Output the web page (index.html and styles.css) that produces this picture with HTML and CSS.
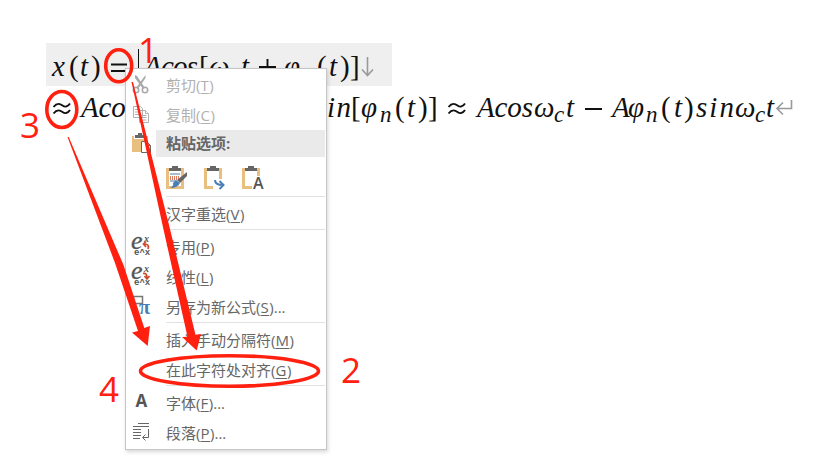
FILE: index.html
```html
<!DOCTYPE html>
<html lang="zh-CN">
<head>
<meta charset="utf-8">
<title>公式对齐</title>
<link rel="stylesheet" href="styles.css">
</head>
<body>
<main class="document">
  <svg class="equation equation-active" width="346" height="43" viewBox="46 43 346 43">
    <text x="52" y="76" textLength="14">x</text><text class="upright" x="69" y="76">(</text><text x="80" y="76">t</text><text class="upright" x="91" y="76">)</text>
    <path class="operator" d="M111 64.5h16M111 71h16M259 67h17M267.500 59v17"/>
    <path class="caret" d="M138.500 49v22"/>
    <text x="144" y="76" textLength="54">Acos</text><text class="upright" x="199" y="76">[</text><text x="209" y="76">ω</text><text class="sub" x="229" y="81">c</text><text x="241" y="76">t</text><text x="284" y="76">φ</text><text class="sub" x="303" y="81">n</text><text class="upright" x="317" y="76">(</text><text x="329" y="76">t</text><text class="upright" x="340" y="76">)</text><text class="upright" x="350" y="76">]</text>
    <path class="mark" d="M367.500 57v18M362 69.500l5.500 6 5.500-6"/>
  </svg>
  <svg class="equation" width="760" height="43" viewBox="46 86 760 43">
    <path class="operator" d="M53.500 107c4-5 7-3 9-1.500s5 2 7.500-2M53.500 113.500c4-5 7-3 9-1.500s5 2 7.500-2M448.500 107c4-5 7-3 9-1.500s5 2 7.500-2M448.500 113.500c4-5 7-3 9-1.500s5 2 7.500-2M585 109h17"/>
    <text x="81" y="117" textLength="56">Acos</text>
    <text x="327" y="117" textLength="24">in</text><text class="upright" x="351" y="117">[</text><text x="361" y="117">φ</text><text class="sub" x="380" y="122">n</text><text class="upright" x="395" y="117">(</text><text x="407" y="117">t</text><text class="upright" x="418" y="117">)</text><text class="upright" x="428" y="117">]</text>
    <text x="477" y="117" textLength="56">Acos</text><text x="534" y="117">ω</text><text class="sub" x="554" y="122">c</text><text x="566" y="117">t</text>
    <text x="612" y="117">A</text><text x="628" y="117">φ</text><text class="sub" x="646" y="122">n</text><text class="upright" x="661" y="117">(</text><text x="674" y="117">t</text><text class="upright" x="684" y="117">)</text><text x="696" y="117" textLength="38">sin</text><text x="735" y="117">ω</text><text class="sub" x="755" y="122">c</text><text x="766" y="117">t</text>
    <path class="mark" d="M791.500 100v8.500H777M783 102.500l-6 6 6 6"/>
  </svg>
</main>

<nav class="menu">
  <div class="item disabled"><svg class="icon" viewBox="0 0 20 20"><g fill="none" stroke="#aaa" stroke-width="1.600"><circle cx="5" cy="16" r="2.700"/><circle cx="14" cy="16" r="2.700"/></g><path d="M4 1l2 1 8 12-2 1L4 4zM14.500 1v3L7 15l-2-1z" fill="#aaa"/></svg><span>剪切(<u>T</u>)</span></div>
  <div class="item disabled"><svg class="icon" viewBox="0 0 20 20" fill="#fff" stroke="#b0b0b0"><path d="M2.500 2.500h7l2 2v9h-9zM8.500 6.500h6l3 3v9h-9z"/><path d="M4 5.500h4M4 8h4M4 10.500h4M10.500 11.500h5M10.500 13.500h5M10.500 16h5M14.500 6.500v3h3"/></svg><span>复制(<u>C</u>)</span></div>
  <div class="heading"><svg class="icon" viewBox="0 0 20 20"><path d="M1 3h16v16H1z" fill="#e8bf7e"/><path d="M3 6V2h3V0h5v2h3v4z" fill="#fff"/><path d="M4 5V2h3V0h4v2h3v3z" fill="#666"/><path d="M10.500 8.500h5l4 4v7h-9zM15.500 8.500v4h4" fill="#fff" stroke="#666"/></svg><span>粘贴选项:</span></div>
  <div class="paste">
    <svg viewBox="0 0 22 24"><path d="M1.500 3.500h15v18h-15z" fill="#fff" stroke="#e8bf7e" stroke-width="3"/><path d="M3 5V2h3V0h6v2h3v3z" fill="#666"/><path d="M4 8h10M4 15h6" stroke="#4a7fb6"/><path d="M4 11h10M4 13h9" stroke="#d05232" stroke-dasharray="1 1" stroke-width="1.500"/><path d="M21 6v4l-7 7-3-3z" fill="#666"/><path d="M10 14l4 3q-2 5-10 5 4-2 3-5z" fill="#4a7fb6"/></svg>
    <svg viewBox="0 0 22 24"><path d="M1.500 3.500h15v18h-15z" fill="#fff" stroke="#e8bf7e" stroke-width="3"/><path d="M3 5V2h3V0h6v2h3v3z" fill="#666"/><path d="M9 13h12v10H9z" fill="#fff"/><path d="M11 14q0 5 8 5M15.500 15l4 4-4 4" fill="none" stroke="#4a7fb6" stroke-width="2"/></svg>
    <svg viewBox="0 0 22 24"><path d="M1.500 3.500h15v18h-15z" fill="#fff" stroke="#e8bf7e" stroke-width="3"/><path d="M3 5V2h3V0h6v2h3v3z" fill="#666"/><path d="M10 10h12v14H10z" fill="#fff"/><text class="paste-letter" x="11" y="22.500">A</text></svg>
  </div>
  <hr>
  <div class="item"><span>汉字重选(<u>V</u>)</span></div>
  <hr>
  <div class="item"><svg class="icon" viewBox="0 0 20 20"><text class="e-large" x="0" y="12.500">e</text><text class="e-small" x="13" y="5.500">x</text><text class="e-mono" x="3" y="19">e^x</text><path d="M17 13c1.500-4-1-5-4-5M15 5.500L12.500 8l2.500 3" class="turn"/></svg><span>专用(<u>P</u>)</span></div>
  <div class="item"><svg class="icon" viewBox="0 0 20 20"><text class="e-large" x="0" y="12.500">e</text><text class="e-small" x="13" y="5.500">x</text><text class="e-mono" x="3" y="19">e^x</text><path d="M12 7.500c3-.5 4 1 4 5M13.500 10l2.500 3 2.500-3" class="turn"/></svg><span>线性(<u>L</u>)</span></div>
  <div class="item"><svg class="icon" viewBox="0 0 20 20"><path d="M2.500.5h9v7h-9zM2.500 8v8" fill="none" stroke="#777" stroke-width="1.500"/><text class="pi" x="8" y="18">π</text></svg><span>另存为新公式(<u>S</u>)...</span></div>
  <hr>
  <div class="item"><span>插入手动分隔符(<u>M</u>)</span></div>
  <div class="item"><span>在此字符处对齐(<u>G</u>)</span></div>
  <hr>
  <div class="item"><svg class="icon" viewBox="0 0 20 20"><text class="font-letter" x="4.500" y="15">A</text></svg><span>字体(<u>F</u>)...</span></div>
  <div class="item"><svg class="icon" viewBox="0 0 20 20" fill="none" stroke="#666"><path d="M7 1.500h11M2 4.500h16M2 7.500h8M2 10.500h8M2 13.500h8M2 16.500h7M17.500 7v8.500H12M14.500 12.500l-3 3 3 3"/></svg><span>段落(<u>P</u>)...</span></div>
</nav>

<svg class="annotations" width="821" height="464" viewBox="0 0 821 464">
  <g class="rings"><ellipse cx="118.700" cy="65.800" rx="13" ry="16"/><ellipse cx="61.800" cy="109.500" rx="15" ry="18"/><ellipse cx="229.500" cy="371" rx="89" ry="15.300"/></g>
  <path d="M131.500 82h1.500L169 225L195.500 334.700l5.500-.7-4.300 16.500L182 337l5.500-.3L162.500 225z"/>
  <path d="M67.500 137h1.200L123.500 265L144.300 328l5.700-2-2.300 20-15.700-13.500 6-1.500L115 263z"/>
  <text x="138" y="62.500">1</text><text x="341" y="383">2</text><text x="20" y="138">3</text><text x="99" y="401.500">4</text>
</svg>
</body>
</html>
```
FILE: styles.css
```css
body { margin: 0; width: 821px; height: 464px; position: relative; overflow: hidden; background: #fff; }
.document { padding: 43px 0 0 46px; }
.equation { display: block; font: italic 29px "Liberation Serif", serif; fill: #111; }
.equation-active { background: #efefef; }
.equation .sub { font-size: 23px; }
.equation .upright { font-style: normal; }
.operator { fill: none; stroke: #111; stroke-width: 1.9; }
.caret { stroke: #111; }
.mark { fill: none; stroke: #999; stroke-width: 1.6; }
.menu { position: absolute; left: 125px; top: 68px; width: 200px; height: 379px; padding-top: 1px; border: 1px solid #c6c6c6; background: #fff; box-shadow: 1px 2px 4px rgba(0,0,0,.16); font: 15px/30px "Open Sans", "Noto Sans CJK SC", sans-serif; color: #666; }
.item, .heading { position: relative; height: 30px; padding-left: 40px; white-space: nowrap; }
.disabled { color: #b1b1b1; }
.icon { position: absolute; left: 5px; top: 4px; width: 20px; height: 20px; overflow: visible; }
.heading { height: 27px; line-height: 27px; margin: 0 1px 0 30px; padding-left: 10px; background: #eaeaea; font-weight: 700; }
.heading .icon { left: -25px; top: 3px; }
.item u { text-underline-offset: 2px; text-decoration-thickness: 1px; letter-spacing: .6px; }
.paste { display: flex; gap: 16px; height: 30px; padding: 9px 0 0 40px; }
.paste svg { width: 22px; height: 24px; overflow: visible; }
hr { height: 1px; border: 0; margin: 0 1px 2px 40px; background: #e1e1e1; }
.paste-letter { font: 600 16px "Open Sans", sans-serif; fill: #555; }
.font-letter { font: bold 17px "Open Sans", sans-serif; fill: #555; }
.e-large { font: italic 26px "Liberation Serif", serif; fill: #555; stroke: #555; stroke-width: .3px; }
.e-small { font: italic bold 10px "Liberation Serif", serif; fill: #555; }
.e-mono { font: bold 9px "Liberation Mono", monospace; fill: #555; }
.turn { fill: none; stroke: #cf4a2b; stroke-width: 1.7; }
.pi { font: bold 20px "Liberation Serif", serif; fill: #4a7fb6; }
.annotations { position: absolute; left: 0; top: 0; fill: #ff2010; font: 35px "Open Sans", sans-serif; }
.rings { fill: none; stroke: #ff2010; stroke-width: 3.6; }
```
